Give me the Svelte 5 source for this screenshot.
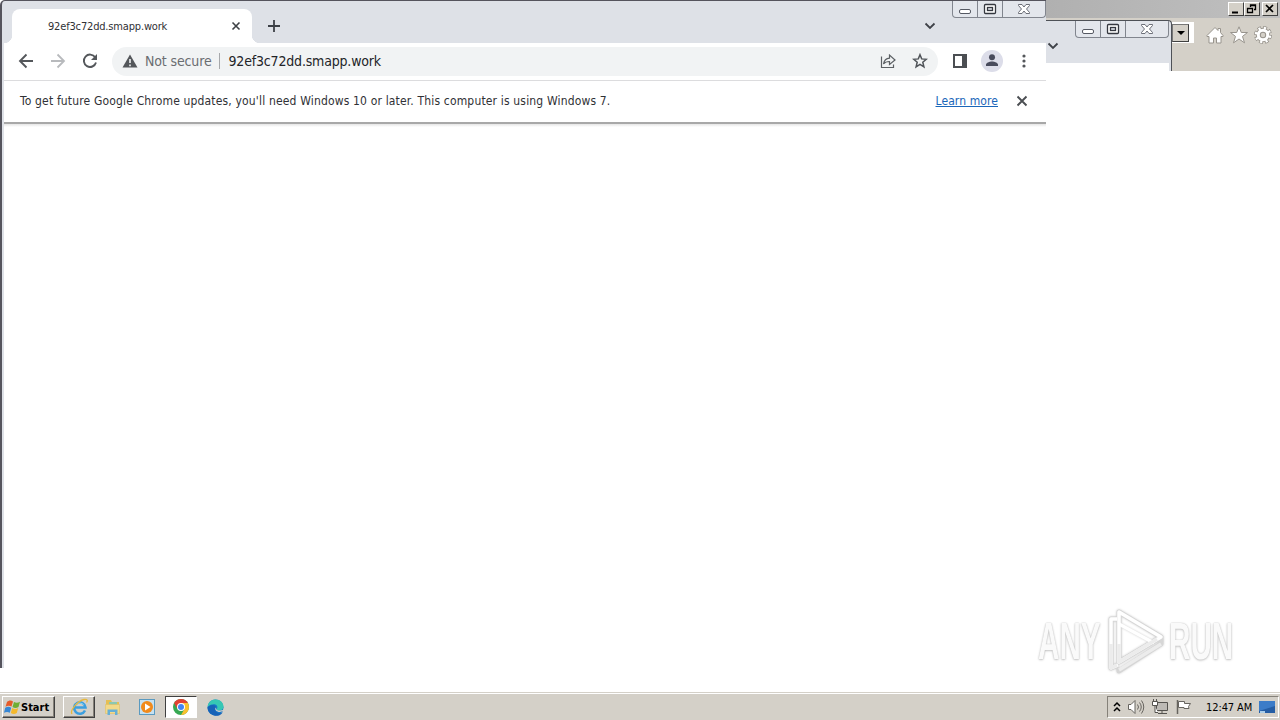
<script lang="ts">
  const host = '92ef3c72dd.smapp.work';
  let tabOpen = $state(true);
  let noticeOpen = $state(true);
  let clock = '12:47 AM';
</script>

{#snippet caption()}
  <div class="caption">
    <button aria-label="Minimize"><svg width="14" height="12" viewBox="0 0 14 12"><rect x="1.5" y="6.5" width="11" height="4" rx="1.5" fill="#fff" stroke="#555963" /></svg></button>
    <button aria-label="Maximize"><svg width="14" height="12" viewBox="0 0 14 12"><rect x="1.5" y="1.5" width="11" height="9" rx="1" fill="#fff" stroke="#353840" stroke-width="1.3" /><rect x="4.5" y="4.500" width="5" height="3" fill="#dce0e8" stroke="#353840" stroke-width="1.3" /></svg></button>
    <button class="wide" aria-label="Close"><svg width="14" height="12" viewBox="0 0 14 12"><path d="M1.500 1.500h3.500l2 2.500 2-2.500h3.500v1L9.500 6l3 3.500v1H9L7 8l-2 2.500H1.500v-1l3-3.500-3-3.500z" fill="#fff" stroke="#5d616b" stroke-width=".9" /></svg></button>
  </div>
{/snippet}

{#snippet chevron()}
  <svg class="chevron" width="12" height="8" viewBox="0 0 12 8"><path d="M1.500 1.500 6 6l4.500-4.500" fill="none" stroke="#3f4248" stroke-width="1.8" /></svg>
{/snippet}

<div class="desktop">
  <section class="explorer">
    <div class="ex-title">
      <button aria-label="Minimize"><svg width="14" height="12"><path d="M3 9.500h6" stroke="#000" stroke-width="2" /></svg></button>
      <button aria-label="Restore"><svg width="14" height="12"><path d="M5.500 4V2h5v4.500H9M5 2.500h6M2.500 5.500h5v4h-5zM2 5.500h6" fill="none" stroke="#000" stroke-width="1.300" /></svg></button>
      <button class="ex-close" aria-label="Close"><svg width="14" height="12"><path d="m3 2 7 7m0-7-7 7" stroke="#000" stroke-width="1.700" /></svg></button>
    </div>
    <div class="ex-tools">
      <div class="combo"><span><svg width="8" height="5"><path d="M0 0h8L4 4z" /></svg></span></div>
      <svg width="18" height="18" viewBox="0 0 18 18"><path d="M1 9.500 9 1.500 12 4.500V2.500h2.500v4L17 9.500v1h-2v6.500h-4.500v-5h-3v5H3v-6.500H1z" fill="#fff" stroke="#98948d" /></svg>
      <svg width="18" height="18" viewBox="0 0 18 18"><path d="m9 .8 2.300 5.700h6.200l-5 3.900 2 6.400L9 13l-5.500 3.800 2-6.400-5-3.900h6.200z" fill="#fff" stroke="#98948d" /></svg>
      <svg width="18" height="18" viewBox="0 0 18 18"><circle cx="9" cy="9" r="7" fill="none" stroke="#98948d" stroke-width="4" stroke-dasharray="3.500 1.998" /><circle cx="9" cy="9" r="4.700" fill="none" stroke="#98948d" stroke-width="5" /><circle cx="9" cy="9" r="7" fill="none" stroke="#fff" stroke-width="2.600" stroke-dasharray="2.200 3.298" stroke-dashoffset="-.65" /><circle cx="9" cy="9" r="4.700" fill="none" stroke="#fff" stroke-width="3" /></svg>
    </div>
  </section>

  <section class="browser back">
    {@render caption()}
    {@render chevron()}
    <div class="back-bar"></div>
  </section>

  <section class="browser front">
    <div class="strip">
      {#if tabOpen}
        <div class="tab">
          <span>{host}</span>
          <button aria-label="Close tab" onclick={() => (tabOpen = false)}><svg width="10" height="10"><path d="m1.500 1.500 7 7m0-7-7 7" stroke="#3e4146" stroke-width="1.600" /></svg></button>
        </div>
      {/if}
      <button class="new-tab" aria-label="New tab"><svg width="14" height="14"><path d="M7 1v12M1 7h12" stroke="#3c4046" stroke-width="1.800" /></svg></button>
      {@render chevron()}
      {@render caption()}
    </div>

    <div class="toolbar">
      <svg width="16" height="16" viewBox="0 0 16 16"><path d="M15 8H2m6.500-6.500L2 8l6.500 6.500" fill="none" stroke="#54575b" stroke-width="1.900" /></svg>
      <svg width="16" height="16" viewBox="0 0 16 16"><path d="M1 8h13M7.500 1.500 14 8l-6.500 6.500" fill="none" stroke="#b8babd" stroke-width="1.800" /></svg>
      <svg width="16" height="16" viewBox="0 0 16 16"><path d="M13.200 4.300A6.200 6.200 0 1 0 14 9.500" fill="none" stroke="#54575b" stroke-width="1.900" /><path d="M15 1v6H9z" fill="#54575b" /></svg>
      <div class="address">
        <svg width="16" height="14" viewBox="0 0 16 14"><path d="M8 .5 15.500 13.500H.5z" fill="#54575b" /><path d="M8 5v4m0 1.500v1.700" stroke="#f1f3f4" stroke-width="1.600" /></svg>
        <span class="security">Not secure</span>
        <span class="url">{host}</span>
        <svg class="share" width="16" height="16" viewBox="0 0 16 16"><path d="M1.500 3.500v11h12v-3M3.500 11c.6-3.500 2.500-5.500 6-5.800V2L15 7l-5.500 4.500V8.500C7 8.500 5 9 3.500 11z" fill="none" stroke="#5c6064" stroke-width="1.200" /></svg>
        <svg width="16" height="16" viewBox="0 0 16 16"><path d="m8 1.700 1.700 4.200 4.600.4-3.500 3 1.100 4.500L8 11.400l-3.900 2.400 1.100-4.500-3.500-3 4.600-.4z" fill="none" stroke="#505459" stroke-width="1.500" /></svg>
      </div>
      <svg class="panel" width="14" height="14"><path d="M1 1h12v12H1zM10.500 1v12" fill="none" stroke="#4b4e52" stroke-width="2" /><path d="M9 1h4v12H9z" fill="#4b4e52" /></svg>
      <svg class="avatar" width="22" height="22" viewBox="0 0 22 22"><circle cx="11" cy="11" r="11" fill="#dcdde9" /><circle cx="11" cy="7.300" r="3" fill="#484b5c" /><path d="M5 16v-1.200c0-2 3.500-3.300 6-3.300s6 1.300 6 3.300V16z" fill="#484b5c" /></svg>
      <svg width="4" height="16" viewBox="0 0 4 16" fill="#54575b"><circle cx="2" cy="3" r="1.600" /><circle cx="2" cy="8" r="1.600" /><circle cx="2" cy="13" r="1.600" /></svg>
    </div>

    {#if noticeOpen}
      <div class="notice">
        <span class="message">To get future Google Chrome updates, you'll need Windows 10 or later. This computer is using Windows 7.</span>
        <a href="#learn">Learn more</a>
        <button aria-label="Dismiss" onclick={() => (noticeOpen = false)}><svg width="12" height="12"><path d="m1.500 1.500 9 9m0-9-9 9" stroke="#4b4e52" stroke-width="1.900" /></svg></button>
      </div>
    {/if}
    <main></main>
  </section>

  <div class="watermark">
    <span class="any">ANY</span>
    <svg width="60" height="66" viewBox="0 0 60 66" fill="none" stroke-linejoin="round">
      <g stroke="#d6d6d6" stroke-width="5"><path d="M13 4 55 29 13 54zM11 11H5v49l7-3M13 60v3l42-27v-6" /></g>
      <g stroke="#fff" stroke-width="3.500"><path d="M13 4 55 29 13 54zM11 11H5v49l7-3" /><path d="M13 16 48 35" /></g>
      <path d="M13 36v18l38-23M5 36v24l6-3M13 62l42-26" stroke="#ececec" stroke-width="3.500" />
    </svg>
    <span class="run">RUN</span>
  </div>

  <footer class="taskbar">
    <button class="start">
      <svg width="17" height="16" viewBox="0 0 17 16"><path d="M3 3c2-2 4-2 6-.5L7.500 7.500c-2-1.200-4-1-6 .2z" fill="#e65b29" /><path d="M10 3c2 1.200 4 1 6-.3L14.500 8c-2 1.200-4 1.200-6 0z" fill="#70ae35" /><path d="M1.200 8.800c2-1.200 4-1.400 6-.1l-1.400 5c-2-1.200-4-1-5.800.1z" fill="#3787d4" /><path d="M8.200 9c2 1.200 4 1.200 6 0l-1.400 5c-2 1.200-4 1.200-6 0z" fill="#f4b92d" /></svg>
      <b>Start</b>
    </button>
    <div class="task raised">
      <svg width="19" height="18" viewBox="0 0 19 18" fill="none"><path d="M15 12.500A5.700 5.700 0 1 1 15.500 9.500H5" stroke="#3b9fdf" stroke-width="2.500" /><path d="M5.500 7C6 4.500 13 4.500 13.500 7" stroke="#8ed6f5" /><path d="M2 16C-.5 12 8 3 14 1.500c4-.8 3.500 1.500 2.500 3" stroke="#e7b83c" stroke-width="1.300" /></svg>
    </div>
    <div class="task">
      <svg width="18" height="18" viewBox="0 0 18 18"><path d="M2 2h5l1 2h7v9H2z" fill="#e5bf54" /><path d="M5 4h8v4H5z" fill="#8cc8b0" /><path d="M1.500 6.500h14v9h-14z" fill="#f3d989" stroke="#dfbf67" stroke-width=".6" /><path d="M3.500 17v-5.500h10V17H11v-3H6v3z" fill="#66afd5" /></svg>
    </div>
    <div class="task">
      <svg width="18" height="18" viewBox="0 0 18 18"><rect x="1.500" y="1.500" width="15" height="15" fill="#c6e1f1" stroke="#5a9ac0" /><circle cx="9" cy="9" r="6" fill="#f18a1b" /><path d="m7 5.500 5.500 3.500L7 12.500z" fill="#fff" /></svg>
    </div>
    <div class="task active">
      <svg width="16" height="16" viewBox="0 0 16 16"><circle cx="8" cy="8" r="8" fill="#36a852" /><path d="M14.900 4A8 8 0 0 1 8 16l3.500-6L8 4z" fill="#fbc02d" /><path d="M1.100 4A8 8 0 0 1 14.900 4H8v4l-3.500 2z" fill="#e34133" /><circle cx="8" cy="8" r="4" fill="#fff" /><circle cx="8" cy="8" r="3" fill="#4285f4" /></svg>
    </div>
    <div class="task">
      <svg width="17" height="17" viewBox="0 0 17 17"><circle cx="8.500" cy="8.500" r="8" fill="#1677c8" /><path d="M.6 8C1 3 4.500.5 8.500.5c5 0 8 3.500 8 7 0 3-2.500 4-5 4-1.500 0-2.200-.7-1.500-1.700C12 6 6 3 .6 8z" fill="#36c7b4" /><path d="M.5 8.500C4 4.500 9 6 9 8.500c-1.500 1-1.500 4 2 5.500 2 .8 4 0 5-1-2 3.500-6 4.500-9 3.500C3 15 .5 12 .5 8.500z" fill="#1762b7" /><path d="M9 8.500c-1.500 1-.5 3.500 2 4.200 2 .5 4 0 5-1l.8-1.500c-1 1.200-3 1.300-5.300 1.300-1.500 0-2.500-1-2.500-3z" fill="#d5d0c8" /></svg>
    </div>

    <div class="tray">
      <svg width="8" height="12"><path d="m1 5 3-3 3 3M1 10l3-3 3 3" fill="none" stroke="#000" stroke-width="1.500" /></svg>
      <svg width="18" height="16" viewBox="0 0 18 16" fill="none" stroke="#67645f"><path d="M1.500 5.500H4L8 1.500v13L4 10.500H1.500z" fill="#fff" /><path d="M10.500 5.500q2 2.500 0 5M12.500 3.500q3.500 4.500 0 9M14.500 1.500q4.500 6.500 0 13" /></svg>
      <svg width="18" height="16" viewBox="0 0 18 16"><path d="M5.500 3.500h11v8h-11zM7 14.500h9M11 12v3" fill="#bdbab5" stroke="#55534f" /><path d="M1.500 2.500h5v4h-5zM2.500 0v2M5.500 0v2M4 7v6.500h3" fill="#fff" stroke="#55534f" /></svg>
      <svg width="18" height="16" viewBox="0 0 18 16"><path d="M2.500 1v14" stroke="#67645f" stroke-width="1.500" /><path d="M3.500 2.500h6v2h6l-2 3 .5 2h-5v-1H3.500z" fill="#fff" stroke="#67645f" /></svg>
      <time>{clock}</time>
      <svg class="show-desktop" width="16" height="13"><path d="M0 0h16v12H0z" fill="#255da4" /><path d="M0 0h16v5L0 10z" fill="#3c7cc8" /><path d="M1 10h5v2H1z" fill="#a9cce8" /></svg>
    </div>
  </footer>
</div>

<style>
  :global(body) { background: #fff; overflow: hidden; }
  * { box-sizing: border-box; }
  svg { display: block; flex: none; }
  button { padding: 0; border: 0; background: none; font: inherit; }

  .desktop {
    position: relative;
    width: 1280px;
    height: 720px;
    display: flex;
    flex-direction: column;
    justify-content: flex-end;
    background: #fff;
    font-family: "DejaVu Sans Condensed", "DejaVu Sans", sans-serif;
  }

  .explorer { position: absolute; top: 0; right: 0; width: 234px; height: 71px; background: #d4d0c8; }
  .ex-title { display: flex; justify-content: flex-end; height: 18px; padding: 2px 2px 0 0; background: linear-gradient(90deg, #b0b0b0, #c0c0c0); }
  .ex-title button { width: 16px; height: 14px; background: #d4d0c8; border: 1px solid; border-color: #fff #404040 #404040 #fff; }
  .ex-title .ex-close { margin-left: 2px; }
  .ex-tools { display: flex; gap: 6px; padding: 8px 7px 0 126px; }
  .combo { display: flex; width: 22px; height: 21px; margin: -4px 6px 0 0; padding-top: 2px; background: #fff; }
  .combo span { display: grid; place-items: center; width: 17px; height: 18px; border: 1px solid; border-color: #777 #404040 #404040 #777; background: #d4d0c8; }

  .browser { position: absolute; background: #dee1e7; overflow: hidden; }
  .back { left: 1046px; top: 20px; width: 126px; height: 51px; border: 1px solid #4e5157; border-width: 1px 1px 0 0; border-top-right-radius: 4px; }
  .back .caption { margin-left: 29px; }
  .back .chevron { margin: 4px 0 0 1px; }
  .back-bar { height: 9px; margin: 13px 2px 0 0; background: #fff; }
  .front { left: 0; top: 0; width: 1046px; height: 668px; border-top: 1px solid #55545d; border-left: 2px solid #55545d; border-top-left-radius: 5px; padding-left: 2px; }

  .caption { display: flex; width: 94px; height: 17px; border: 1px solid #81858e; border-top: 0; border-radius: 0 0 4px 4px; background: #e3e6ec; }
  .caption button { display: grid; place-items: center; width: 25px; border-right: 1px solid #81858e; }
  .caption .wide { flex: 1; border: 0; }

  .strip { display: flex; align-items: flex-start; height: 42px; padding-left: 8px; }
  .tab { position: relative; display: flex; align-items: center; width: 240px; height: 34px; margin-top: 8px; padding: 0 11px 0 36px; border-radius: 8px 8px 0 0; background: #fff; font-size: 11px; color: #303135; }
  .tab::before, .tab::after { content: ""; position: absolute; bottom: 0; width: 8px; height: 8px; }
  .tab::before { left: -8px; background: radial-gradient(circle at 0 0, transparent 8px, #fff 8.5px); }
  .tab::after { right: -8px; background: radial-gradient(circle at 100% 0, transparent 8px, #fff 8.5px); }
  .tab span { flex: 1; letter-spacing: -.17px; }
  .new-tab { margin: 18px 0 0 15px; }
  .strip .chevron { margin: 21px 16px 0 auto; }

  .toolbar { display: flex; align-items: center; gap: 16px; height: 38px; padding: 0 20px 1px 14px; border-bottom: 1px solid #dcdcde; background: #fff; }
  .address { display: flex; align-items: center; flex: 1; height: 29px; margin-left: -2px; padding: 0 10px; border-radius: 15px; background: #f1f3f4; font-size: 14px; }
  .security { margin-left: 7px; padding-right: 7px; border-right: 1px solid #a6a8ab; color: #6a6d71; letter-spacing: -.14px; line-height: 16px; }
  .url { margin-left: 9px; color: #222428; letter-spacing: -.18px; }
  .share { margin: 0 16px 0 auto; }
  .panel { margin: 0 -2px 0 -1px; }
  .avatar { margin-right: 3px; }

  .notice { display: flex; align-items: center; height: 41px; padding: 0 18px 1px 16px; background: #fff; color: #303135; font-size: 12px; }
  .message { flex: 1; white-space: nowrap; letter-spacing: .164px; }
  .notice a { margin-right: 18px; color: #1a66b9; letter-spacing: .1px; }
  main { height: 546px; border-top: 2px solid #a8a8a8; background: linear-gradient(#e5e5e5, #fff 3px); }

  .watermark { position: absolute; left: 1038px; top: 607px; display: flex; align-items: center; height: 68px; color: #fff; font: bold 52px/1 "Liberation Sans", sans-serif; text-shadow: 0 0 2px #bcbcbc, 0 1px 3px #c8c8c8; }
  .watermark span { display: block; transform: scaleX(.57); transform-origin: left; width: 68px; -webkit-text-fill-color: #fafafa; }
  .watermark svg { margin-top: -1px; filter: drop-shadow(0 0 1px #ccc); }
  .watermark .run { margin-left: 3px; }

  .taskbar { display: flex; align-items: center; height: 27px; padding-right: 1px; background: #d4d0c8; border-top: 1px solid #fff; box-shadow: 0 -1px #d4d0c8; }
  .start { display: flex; align-items: center; width: 53px; height: 22px; margin: 0 8px 0 2px; padding-left: 1px; border: 1px solid; border-color: #fff #404040 #404040 #fff; box-shadow: inset -1px -1px #858179; font-size: 11px; letter-spacing: 0; }
  .task { display: grid; place-items: center; width: 32px; height: 22px; margin-right: 2px; }
  .raised { border: 1px solid; border-color: #fff #404040 #404040 #fff; box-shadow: inset -1px -1px #858179; }
  .active { border: 1px solid; border-color: #404040 #fff #fff #404040; background: #fff; }
  .tray { display: flex; align-items: center; gap: 6px; height: 22px; margin-left: auto; padding: 0 3px 0 5px; border: 1px solid; border-color: #858179 #fff #fff #858179; font-size: 11px; }
  time { width: 46px; margin: 0 1px 0 7px; white-space: nowrap; letter-spacing: -.1px; }
</style>
